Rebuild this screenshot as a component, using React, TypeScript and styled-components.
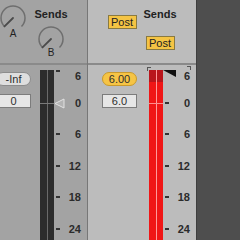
import React from 'react';
import styled, { createGlobalStyle } from 'styled-components';

const GlobalStyle = createGlobalStyle`
  body {
    margin: 0;
    background: #4e4e4e;
    font-family: 'Liberation Sans', Arial, sans-serif;
  }
`;

const Frame = styled.div`
  display: flex;
  width: 240px;
  height: 240px;
  overflow: hidden;
  background: #4e4e4e;
`;

const Track = styled.section<{ $width: number; $selected?: boolean }>`
  display: flex;
  justify-content: flex-end;
  flex-shrink: 0;
  width: ${(p) => p.$width}px;
  height: 240px;
  overflow: hidden;
  background: ${(p) => (p.$selected ? '#bcbcbc' : '#a3a3a3')};
  border-right: 1px solid ${(p) => (p.$selected ? '#3e3e3e' : '#777777')};
`;

const TrackBody = styled.div`
  display: flex;
  flex-direction: column;
  flex-shrink: 0;
  width: 108px;
`;

const SendsSection = styled.div`
  display: grid;
  grid-template-columns: 38px 38px;
  height: 63px;
  padding-left: 15px;
  border-bottom: 2px solid #8a8a8a;
`;

const SendColumn = styled.div<{ $top: number }>`
  display: flex;
  flex-direction: column;
  align-items: center;
  padding-top: ${(p) => p.$top}px;
`;

const SendsTitle = styled.div`
  height: 12px;
  font-size: 11px;
  font-weight: 700;
  line-height: 12px;
  color: #222;
`;

const KnobSlot = styled.div<{ $space: number }>`
  display: flex;
  flex-direction: column;
  align-items: center;
  margin-top: ${(p) => p.$space}px;
`;

const KnobLetter = styled.span<{ $lift: number }>`
  margin-top: ${(p) => -p.$lift}px;
  font-size: 10px;
  line-height: 10px;
  color: #222;
`;

const PostButton = styled.button<{ $space: number }>`
  width: 29px;
  height: 14px;
  margin-top: ${(p) => p.$space}px;
  padding: 0;
  background: #f5c444;
  border: 1px solid #8a7a40;
  font-family: inherit;
  font-size: 11px;
  line-height: 12px;
  color: #222;
`;

const MixerSection = styled.div`
  display: flex;
  flex: 1;
  padding-top: 5px;
`;

const Controls = styled.div<{ $shift: number }>`
  display: flex;
  flex-direction: column;
  width: 35px;
  margin-left: ${(p) => p.$shift}px;
  margin-right: ${(p) => 61 - p.$shift - 35}px;
  padding-top: 2px;
`;

const Pill = styled.div<{ $active?: boolean }>`
  height: 12px;
  border-radius: 7px;
  background: ${(p) => (p.$active ? '#f6c445' : '#dedede')};
  border: 1px solid ${(p) => (p.$active ? '#c99a2c' : '#8c8c8c')};
  font-size: 11px;
  line-height: 12px;
  text-align: center;
  color: #2e2e2e;
`;

const ValueBox = styled.div`
  height: 12px;
  margin-top: 8px;
  background: #e6e6e6;
  border: 1px solid #7c7c7c;
  font-size: 11px;
  line-height: 12px;
  text-align: center;
  color: #2e2e2e;
`;

const Meter = styled.div<{ $selected?: boolean }>`
  position: relative;
  display: flex;
  gap: 1px;
  flex-shrink: 0;
  width: 14px;
  background: ${(p) => (p.$selected ? '#ff9a9a' : '#6a6a6a')};

  &::after {
    content: '';
    position: absolute;
    left: 0;
    right: 0;
    top: 33px;
    height: 1px;
    background: ${(p) => (p.$selected ? '#ff8c8c' : '#7a7a7a')};
  }

  &::before {
    content: '';
    display: ${(p) => (p.$selected ? 'block' : 'none')};
    position: absolute;
    left: -2px;
    top: -3px;
    width: 3px;
    height: 3px;
    border-left: 1px solid #555;
    border-top: 1px solid #555;
  }
`;

const MeterBar = styled.div<{ $selected?: boolean }>`
  flex: 1;
  background: ${(p) =>
    p.$selected ? 'linear-gradient(#b9161c 0 12px, #f01616 12px)' : '#2c2c2c'};
`;

const Scale = styled.div<{ $selected?: boolean }>`
  position: relative;
  display: flex;
  flex-direction: column;
  width: 27px;

  &::after {
    content: '';
    display: ${(p) => (p.$selected ? 'block' : 'none')};
    position: absolute;
    left: 24px;
    top: -4px;
    width: 3px;
    height: 3px;
    border-right: 1px solid #555;
    border-top: 1px solid #555;
  }
`;

const ScaleRow = styled.div<{ $space: number }>`
  display: flex;
  align-items: center;
  height: 12px;
  margin-top: ${(p) => p.$space}px;
`;

const MarkerSlot = styled.div<{ $top?: boolean }>`
  display: flex;
  align-self: ${(p) => (p.$top ? 'flex-start' : 'center')};
  width: 13px;
`;

const Tick = styled.span`
  width: 4px;
  height: 2px;
  margin-left: 2px;
  background: #333;
`;

const ScaleLabel = styled.span`
  width: 14px;
  font-size: 11px;
  font-weight: 700;
  line-height: 12px;
  text-align: right;
  color: #2b2b2b;
`;

const Knob: React.FC = () => {
  const c = 14;
  const r = 12;
  const d = r * Math.SQRT1_2;
  return (
    <svg width="28" height="28" viewBox="0 0 28 28">
      <path
        d={`M ${c - d} ${c + d} A ${r} ${r} 0 1 1 ${c + d} ${c + d}`}
        fill="none"
        stroke="#6e6e6e"
        strokeWidth="1.5"
      />
      <line x1={c} y1={c} x2={c - d} y2={c + d} stroke="#4a4a4a" strokeWidth="1.8" strokeLinecap="round" />
    </svg>
  );
};

const OutlineMarker = () => (
  <svg width="11" height="11" viewBox="0 0 11 11">
    <polygon points="1,5.5 10,1 10,10" fill="#b4b4b4" stroke="#e2e2e2" strokeWidth="1" />
  </svg>
);

const WedgeMarker = () => (
  <svg width="13" height="7" viewBox="0 0 13 7">
    <polygon points="0,0 13,0 13,7" fill="#111" />
  </svg>
);

type Mark = { label: string; space: number };

const marks: Mark[] = [
  { label: '6', space: 0 },
  { label: '0', space: 15 },
  { label: '6', space: 19 },
  { label: '12', space: 20 },
  { label: '18', space: 19 },
  { label: '24', space: 20 },
];

type MixerProps = {
  selected?: boolean;
  volumeIndex: number;
  pill: string;
  value: string;
  shift: number;
};

const Mixer: React.FC<MixerProps> = ({ selected, volumeIndex, pill, value, shift }) => (
  <MixerSection>
    <Controls $shift={shift}>
      <Pill $active={selected}>{pill}</Pill>
      <ValueBox>{value}</ValueBox>
    </Controls>
    <Meter $selected={selected}>
      <MeterBar $selected={selected} />
      <MeterBar $selected={selected} />
    </Meter>
    <Scale $selected={selected}>
      {marks.map((m, i) => (
        <ScaleRow key={i} $space={m.space}>
          <MarkerSlot $top={i === 0}>
            {i === volumeIndex ? (selected ? <WedgeMarker /> : <OutlineMarker />) : <Tick />}
          </MarkerSlot>
          <ScaleLabel>{m.label}</ScaleLabel>
        </ScaleRow>
      ))}
    </Scale>
  </MixerSection>
);

const App: React.FC = () => {
  return (
    <>
      <GlobalStyle />
      <Frame>
        <Track $width={87}>
          <TrackBody>
            <SendsSection>
              <SendColumn $top={4}>
                <Knob />
                <KnobLetter $lift={3}>A</KnobLetter>
              </SendColumn>
              <SendColumn $top={8}>
                <SendsTitle>Sends</SendsTitle>
                <KnobSlot $space={5}>
                  <Knob />
                  <KnobLetter $lift={5}>B</KnobLetter>
                </KnobSlot>
              </SendColumn>
            </SendsSection>
            <Mixer volumeIndex={1} pill="-Inf" value="0" shift={17} />
          </TrackBody>
        </Track>
        <Track $width={108} $selected>
          <TrackBody>
            <SendsSection>
              <SendColumn $top={15}>
                <PostButton $space={0}>Post</PostButton>
              </SendColumn>
              <SendColumn $top={8}>
                <SendsTitle>Sends</SendsTitle>
                <PostButton $space={16}>Post</PostButton>
              </SendColumn>
            </SendsSection>
            <Mixer selected volumeIndex={0} pill="6.00" value="6.0" shift={14} />
          </TrackBody>
        </Track>
      </Frame>
    </>
  );
};

export default App;
